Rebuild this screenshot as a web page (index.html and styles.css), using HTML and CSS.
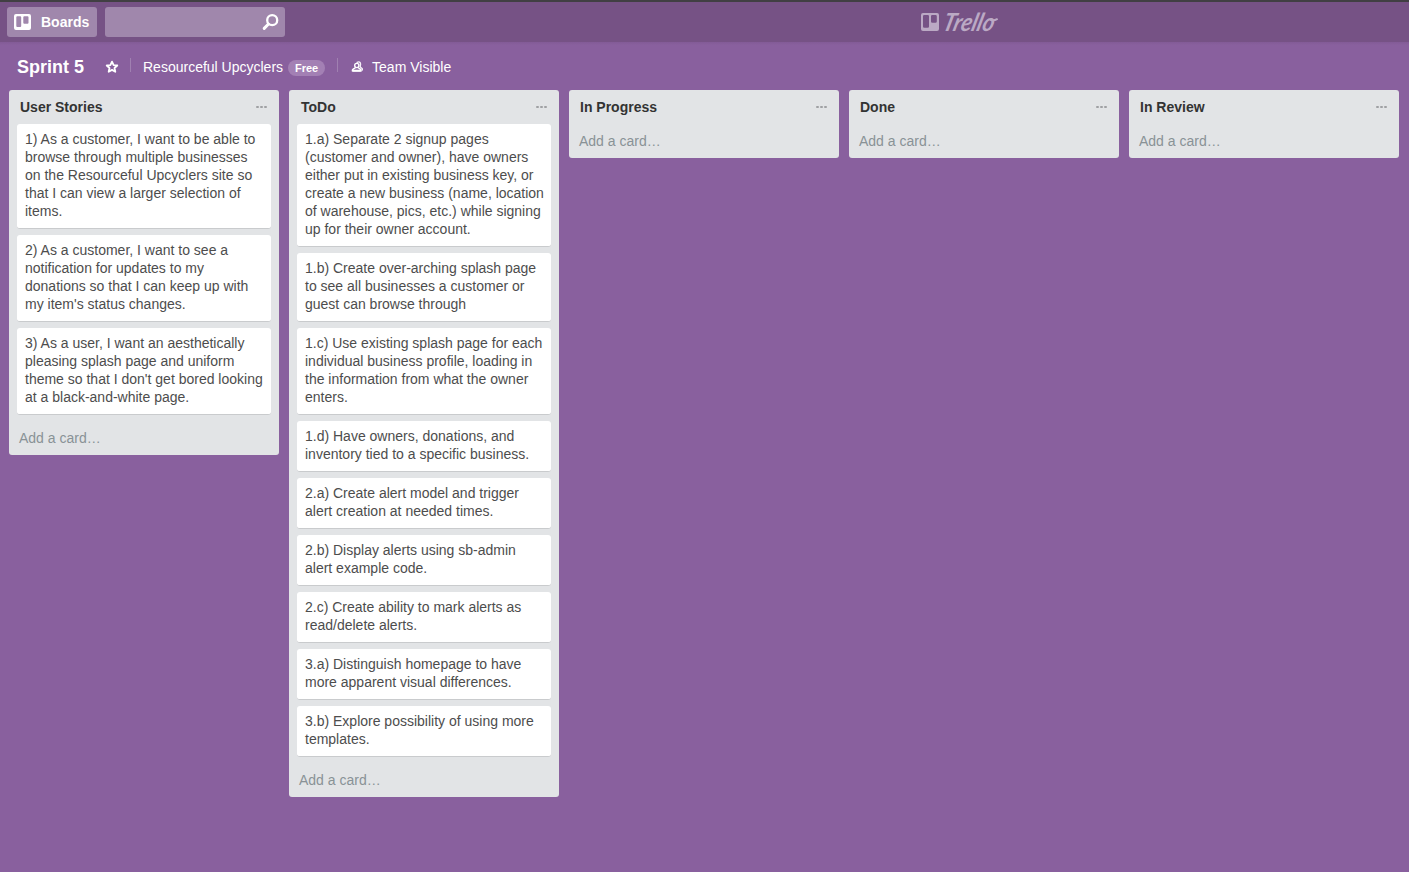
FILE: index.html
```html
<!DOCTYPE html>
<html lang="en">
<head>
<meta charset="utf-8">
<title>Sprint 5 | Trello</title>
<link rel="stylesheet" href="styles.css">
</head>
<body>
<header class="topbar">
  <button class="boards-btn">
    <svg class="boards-icon" viewBox="0 0 17 16"><path fill="#fff" fill-rule="evenodd" d="M2 0h13a2 2 0 0 1 2 2v12a2 2 0 0 1-2 2H2a2 2 0 0 1-2-2V2a2 2 0 0 1 2-2zM3.300 2.200a1 1 0 0 0-1 1v8.800a1 1 0 0 0 1 1h2.900a1 1 0 0 0 1-1v-8.800a1 1 0 0 0-1-1zM10.300 2.200a1 1 0 0 0-1 1v5.600a1 1 0 0 0 1 1h3.200a1 1 0 0 0 1-1v-5.600a1 1 0 0 0-1-1z"/></svg>
    <span>Boards</span>
  </button>
  <div class="search">
    <svg class="search-icon" viewBox="0 0 17 17"><circle cx="10.200" cy="6.200" r="5" fill="none" stroke="#fff" stroke-width="2.300"/><path d="M6.500 10L2.200 14.400" stroke="#fff" stroke-width="3" stroke-linecap="round"/></svg>
  </div>
  <div class="brand">
    <svg class="brand-icon" viewBox="0 0 18 18"><path fill="currentColor" fill-rule="evenodd" d="M2 0h14a2 2 0 0 1 2 2v14a2 2 0 0 1-2 2H2a2 2 0 0 1-2-2V2a2 2 0 0 1 2-2zM3.200 2a1.200 1.200 0 0 0-1.200 1.200v10.400a1.200 1.200 0 0 0 1.200 1.200h3.600a1.200 1.200 0 0 0 1.200-1.200v-10.400a1.200 1.200 0 0 0-1.200-1.200zM11.200 2a1.200 1.200 0 0 0-1.200 1.200v5.400a1.200 1.200 0 0 0 1.200 1.200h3.400a1.200 1.200 0 0 0 1.200-1.200v-5.400a1.200 1.200 0 0 0-1.200-1.200z"/></svg>
    <svg class="wordmark" viewBox="0 0 56 24"><text x="0" y="20.500" textLength="51" lengthAdjust="spacingAndGlyphs" transform="translate(5 0) skewX(-15)">Trello</text><path d="M49 10Q52 11 55 9.200" fill="none" stroke="currentColor" stroke-width="2" stroke-linecap="round"/></svg>
  </div>
</header>
<div class="board-header">
  <h1 class="board-title">Sprint 5</h1>
  <svg class="star" viewBox="0 0 14 14"><path d="M7 1.600L8.600 5.100L12.300 5.500L9.500 8L10.300 11.800L7 9.900L3.700 11.800L4.500 8L1.700 5.500L5.400 5.100Z" fill="none" stroke="#fff" stroke-width="1.800" stroke-linejoin="round"/></svg>
  <i class="divider"></i>
  <span class="team">Resourceful Upcyclers</span>
  <span class="plan">Free</span>
  <i class="divider divider-wide"></i>
  <svg class="people" viewBox="0 0 13 12"><path fill="none" stroke="#f4eef7" stroke-width="1.400" stroke-linecap="round" stroke-linejoin="round" d="M6.200 1.300C7.800.3 9.800 1.300 9.500 3.600Q9.200 5 9.300 6L11.300 7.800V9"/><circle cx="5.800" cy="4.500" r="2.100" fill="none" stroke="#fff" stroke-width="1.400"/><path d="M4.700 6.500L2.200 8.200Q1.300 8.900 1.400 10H10.100Q10.200 8.900 9.300 8.200L6.900 6.500" fill="none" stroke="#fff" stroke-width="1.500" stroke-linejoin="round"/><path d="M2 9.600H9.600" stroke="#fff" stroke-width="1.800"/></svg>
  <span class="visibility">Team Visible</span>
</div>
<main class="board">
  <section class="list">
    <header class="list-head"><h2>User Stories</h2><span class="menu"><i></i><i></i><i></i></span></header>
    <article class="card">1) As a customer, I want to be able to browse through multiple businesses on the Resourceful Upcyclers site so that I can view a larger selection of items.</article>
    <article class="card">2) As a customer, I want to see a notification for updates to my donations so that I can keep up with my item's status changes.</article>
    <article class="card">3) As a user, I want an aesthetically pleasing splash page and uniform theme so that I don't get bored looking at a black-and-white page.</article>
    <a class="add">Add a card…</a>
  </section>
  <section class="list">
    <header class="list-head todo-head"><h2>ToDo</h2><span class="menu"><i></i><i></i><i></i></span></header>
    <article class="card">1.a) Separate 2 signup pages (customer and owner), have owners either put in existing business key, or create a new business (name, location of warehouse, pics, etc.) while signing up for their owner account.</article>
    <article class="card">1.b) Create over-arching splash page to see all businesses a customer or guest can browse through</article>
    <article class="card">1.c) Use existing splash page for each individual business profile, loading in the information from what the owner enters.</article>
    <article class="card">1.d) Have owners, donations, and inventory tied to a specific business.</article>
    <article class="card">2.a) Create alert model and trigger alert creation at needed times.</article>
    <article class="card">2.b) Display alerts using sb-admin alert example code.</article>
    <article class="card">2.c) Create ability to mark alerts as read/delete alerts.</article>
    <article class="card">3.a) Distinguish homepage to have more apparent visual differences.</article>
    <article class="card">3.b) Explore possibility of using more templates.</article>
    <a class="add">Add a card…</a>
  </section>
  <section class="list">
    <header class="list-head"><h2>In Progress</h2><span class="menu"><i></i><i></i><i></i></span></header>
    <a class="add">Add a card…</a>
  </section>
  <section class="list">
    <header class="list-head"><h2>Done</h2><span class="menu"><i></i><i></i><i></i></span></header>
    <a class="add">Add a card…</a>
  </section>
  <section class="list">
    <header class="list-head"><h2>In Review</h2><span class="menu"><i></i><i></i><i></i></span></header>
    <a class="add">Add a card…</a>
  </section>
</main>
</body>
</html>
```
FILE: styles.css
```css
* { box-sizing: border-box; }
body {
  margin: 0;
  height: 872px;
  overflow: hidden;
  background: #89609e;
  font: 14px/18px "Liberation Sans", Arial, sans-serif;
  color: #4d4d4d;
}
h1, h2 { margin: 0; }
.topbar {
  display: flex;
  height: 42px;
  padding: 5px 7px 0;
  border-top: 2px solid #413f43;
  background: #765285;
}
.boards-btn {
  display: flex;
  align-items: center;
  gap: 10px;
  width: 90px;
  height: 30px;
  padding: 0 0 0 7px;
  border: 0;
  border-radius: 3px;
  background: #a087ac;
  color: #fff;
  font: bold 14px/30px "Liberation Sans", Arial, sans-serif;
}
.boards-icon { width: 17px; height: 16px; }
.search {
  display: flex;
  justify-content: flex-end;
  width: 180px;
  height: 30px;
  margin-left: 8px;
  padding: 7px 6px 0 0;
  border-radius: 3px;
  background: #a087ac;
}
.search-icon { width: 17px; height: 17px; }
.brand {
  display: flex;
  margin-left: 636px;
  color: #bba9c4;
}
.brand-icon { width: 18px; height: 18px; margin-top: 6px; }
.wordmark { width: 56px; height: 24px; margin: 3px 0 0 3px; overflow: visible; }
.wordmark text { font: italic 700 25px Lato, sans-serif; fill: currentColor; }
.board-header {
  display: flex;
  height: 48px;
  padding: 15px 0 0 17px;
  background: linear-gradient(#825b96, #89609e 3px);
  color: #fff;
  line-height: 20px;
}
.board-title { width: 88px; font-size: 18px; line-height: 20px; }
.star { width: 14px; height: 14px; margin-top: 3px; }
.divider { width: 1px; height: 14px; margin: 1px 12px 0 11px; background: #a080b1; }
.divider-wide { margin: 1px 13px 0 12px; }
.plan {
  width: 37px;
  height: 16px;
  margin: 3px 0 0 5px;
  border-radius: 8px;
  background: #a380b4;
  font: bold 11px/16px "Liberation Sans", Arial, sans-serif;
  text-align: center;
}
.people { width: 13px; height: 12px; margin-top: 4px; }
.visibility { margin-left: 8px; }
.board { display: flex; align-items: flex-start; gap: 10px; padding-left: 9px; }
.list {
  flex: 0 0 270px;
  padding: 0 8px;
  border-radius: 3px;
  background: #e2e4e6;
}
.list-head {
  display: flex;
  justify-content: space-between;
  height: 34px;
  padding: 8px 4px 0 3px;
}
.todo-head { padding-left: 4px; }
.list-head h2 { font-size: 14px; line-height: 18px; color: #333; }
.menu { display: flex; gap: 1px; padding-top: 8px; }
.menu i { width: 3px; height: 2px; border-radius: 1px; background: #9fa1a3; }
.card {
  margin-bottom: 6px;
  padding: 6px 6px 8px 8px;
  border-bottom: 1px solid #c9cbcd;
  border-radius: 3px;
  background: #fff;
}
.add { display: block; height: 34px; padding: 8px 2px; color: #899296; }
```
